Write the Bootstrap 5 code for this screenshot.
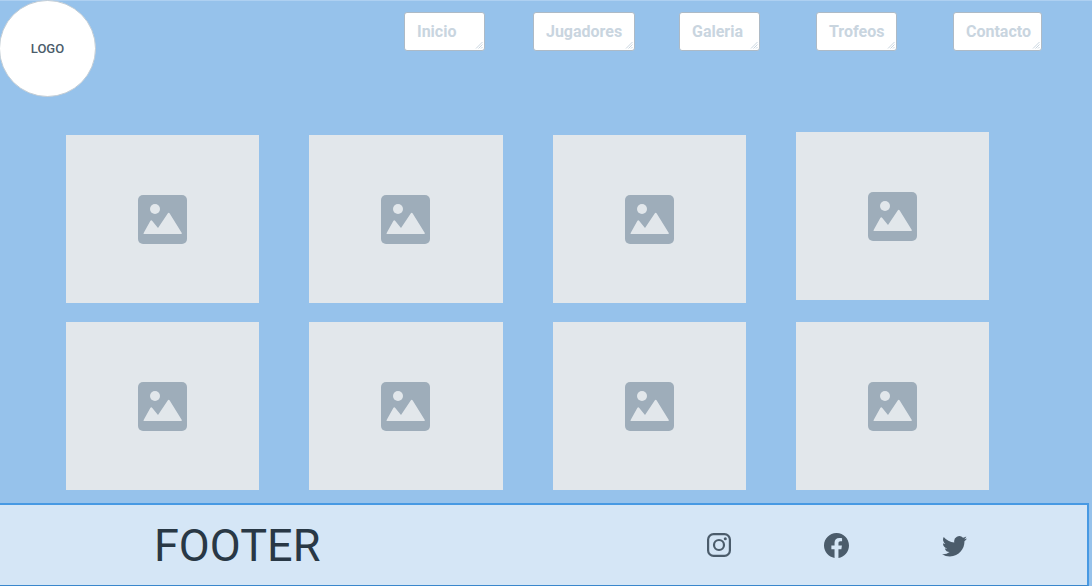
<!DOCTYPE html>
<html lang="es">
<head>
<meta charset="utf-8">
<meta name="viewport" content="width=device-width, initial-scale=1">
<title>Galeria</title>
<link href="https://cdn.jsdelivr.net/npm/bootstrap@5.3.0/dist/css/bootstrap.min.css" rel="stylesheet">
<style>
  body { background: #96c2eb; color: #293845; font-family: Roboto, "Liberation Sans", sans-serif; }
  .site-header { border-top: 1px solid #aed0f1; }
  .logo-disc { width: 97px; height: 97px; margin: -1px 0 0 -1px; border: 1px solid #c3cdd5; font-size: 13px; color: #4b5c6b; font-weight: 500; }
  .site-menu { padding: 11px 50px 0 0; gap: 12px 56px; }
  .menu-box { height: 39px; min-width: 81px; padding: 0 10px 0 12px; border: 1px solid #adbac6; border-radius: 3px; font-size: 16px; color: #c9d5df; }
  .menu-box:hover { color: #9eadba; }
  .menu-narrow { margin-right: -8px; }
  .menu-tight { min-width: 102px; margin-right: -12px; }
  .grip { right: 1px; bottom: 1px; }
  .gallery { padding: 35px 103px 13px 66px; gap: 50px; }
  .gallery-col { flex: 1 1 0; gap: 19px; }
  .gallery-col-loose { gap: 22px; }
  .photo { height: 168px; background: #e2e7eb; }
  .site-footer { min-height: 83px; margin-right: 3px; padding: 0 120px 0 154px; background: #d5e6f6; border: 2px solid #4799e3; border-left: 0; border-bottom: 1px solid #3a87cc; }
  .footer-title { padding-top: 2px; font-size: 45px; line-height: 52px; }
  .social { gap: 93px; }
  .social a { color: #4b5c6b; }
</style>
</head>
<body class="d-flex flex-column min-vh-100">
<svg class="d-none">
  <symbol id="picture" viewBox="0 0 49 49">
    <rect width="49" height="49" rx="5" fill="#9eadba"/>
    <circle cx="17" cy="14" r="5" fill="#e2e7eb"/>
    <path d="M5.500 38.200 12.300 26q1-1.400 2 0L20 33 29.700 18.400q1-1.400 2 0L43.800 38q.3 1-.7 1H6.200q-1 0-.7-.8z" fill="#e2e7eb"/>
  </symbol>
  <symbol id="grip" viewBox="0 0 8 8">
    <path d="M1 7.500 7.500 1M3.500 7.500l4-4M6 7.500 7.500 6" stroke="#c9d5df" fill="none"/>
  </symbol>
</svg>

<header class="site-header d-flex justify-content-between align-items-start">
  <div class="logo-disc rounded-circle bg-white d-flex align-items-center justify-content-center flex-shrink-0">LOGO</div>
  <nav class="site-menu d-flex flex-wrap justify-content-end" aria-label="Principal">
    <a href="#" class="menu-box menu-narrow position-relative d-flex align-items-center bg-white fw-bold text-decoration-none">Inicio<svg class="grip position-absolute" width="8" height="8"><use href="#grip"/></svg></a>
    <a href="#" class="menu-box menu-tight position-relative d-flex align-items-center bg-white fw-bold text-decoration-none">Jugadores<svg class="grip position-absolute" width="8" height="8"><use href="#grip"/></svg></a>
    <a href="#" class="menu-box position-relative d-flex align-items-center bg-white fw-bold text-decoration-none">Galeria<svg class="grip position-absolute" width="8" height="8"><use href="#grip"/></svg></a>
    <a href="#" class="menu-box position-relative d-flex align-items-center bg-white fw-bold text-decoration-none">Trofeos<svg class="grip position-absolute" width="8" height="8"><use href="#grip"/></svg></a>
    <a href="#" class="menu-box position-relative d-flex align-items-center bg-white fw-bold text-decoration-none">Contacto<svg class="grip position-absolute" width="8" height="8"><use href="#grip"/></svg></a>
  </nav>
</header>

<main class="gallery d-flex align-items-end">
  <div class="gallery-col d-flex flex-column">
    <div class="photo d-flex align-items-center justify-content-center"><svg width="49" height="49"><use href="#picture"/></svg></div>
    <div class="photo d-flex align-items-center justify-content-center"><svg width="49" height="49"><use href="#picture"/></svg></div>
  </div>
  <div class="gallery-col d-flex flex-column">
    <div class="photo d-flex align-items-center justify-content-center"><svg width="49" height="49"><use href="#picture"/></svg></div>
    <div class="photo d-flex align-items-center justify-content-center"><svg width="49" height="49"><use href="#picture"/></svg></div>
  </div>
  <div class="gallery-col d-flex flex-column">
    <div class="photo d-flex align-items-center justify-content-center"><svg width="49" height="49"><use href="#picture"/></svg></div>
    <div class="photo d-flex align-items-center justify-content-center"><svg width="49" height="49"><use href="#picture"/></svg></div>
  </div>
  <div class="gallery-col gallery-col-loose d-flex flex-column">
    <div class="photo d-flex align-items-center justify-content-center"><svg width="49" height="49"><use href="#picture"/></svg></div>
    <div class="photo d-flex align-items-center justify-content-center"><svg width="49" height="49"><use href="#picture"/></svg></div>
  </div>
</main>

<footer class="site-footer mt-auto d-flex align-items-center justify-content-between">
  <div class="footer-title">FOOTER</div>
  <div class="social d-flex">
    <a href="#" class="d-flex" aria-label="Instagram"><svg width="24" height="24" viewBox="0 0 24 24" fill="none" stroke="currentColor" stroke-width="2.200"><rect x="1.100" y="1.100" width="21.800" height="21.800" rx="5.500"/><circle cx="12" cy="12" r="5"/><circle cx="18.300" cy="5.700" r="1.500" fill="currentColor" stroke="none"/></svg></a>
    <a href="#" class="d-flex" aria-label="Facebook"><svg width="25" height="25" viewBox="0 0 16 16" fill="currentColor"><path d="M16 8.049c0-4.446-3.582-8.050-8-8.050C3.580 0-.002 3.603-.002 8.050c0 4.017 2.926 7.347 6.750 7.951v-5.625h-2.030V8.050H6.750V6.275c0-2.017 1.195-3.131 3.022-3.131.876 0 1.791.157 1.791.157v1.980h-1.009c-.993 0-1.303.621-1.303 1.258v1.510h2.218l-.354 2.326H9.250V16c3.824-.604 6.750-3.934 6.750-7.951z"/></svg></a>
    <a href="#" class="d-flex" aria-label="Twitter"><svg width="25" height="25" viewBox="0 0 16 16" fill="currentColor"><path d="M5.026 15c6.038 0 9.341-5.003 9.341-9.334 0-.14 0-.282-.006-.422A6.685 6.685 0 0 0 16 3.542a6.658 6.658 0 0 1-1.889.518 3.301 3.301 0 0 0 1.447-1.817 6.533 6.533 0 0 1-2.087.793A3.286 3.286 0 0 0 7.875 6.030a9.325 9.325 0 0 1-6.767-3.429 3.289 3.289 0 0 0 1.018 4.382A3.323 3.323 0 0 1 .64 6.575v.045a3.288 3.288 0 0 0 2.632 3.218 3.203 3.203 0 0 1-.865.115 3.230 3.230 0 0 1-.614-.057 3.283 3.283 0 0 0 3.067 2.277A6.588 6.588 0 0 1 .78 13.580a6.320 6.320 0 0 1-.78-.045A9.344 9.344 0 0 0 5.026 15z"/></svg></a>
  </div>
</footer>
<script src="https://cdn.jsdelivr.net/npm/bootstrap@5.3.0/dist/js/bootstrap.bundle.min.js"></script>
</body>
</html>
